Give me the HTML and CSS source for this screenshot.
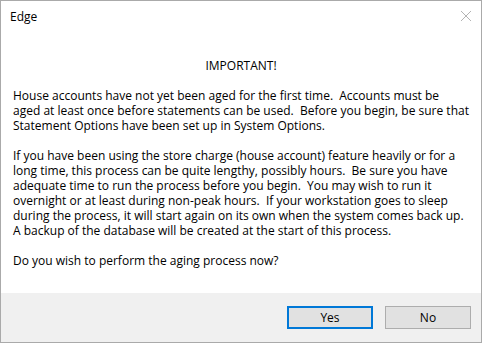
FILE: index.html
```html
<!DOCTYPE html>
<html>
<head>
<meta charset="utf-8">
<link rel="stylesheet" href="styles.css">
</head>
<body>
<div class="window">
  <div class="titlebar">
    <span class="title">Edge</span>
    <svg class="close" width="12" height="12" viewBox="0 0 12 12"><path d="M1 1 L11 11 M11 1 L1 11" stroke="#b4b4b4" stroke-width="1" fill="none"/></svg>
  </div>
  <div class="content">
    <div class="heading">IMPORTANT!</div>
    <div class="blank"></div>
    <div class="line">House accounts have not yet been aged for the first time.  Accounts must be</div>
    <div class="line">aged at least once before statements can be used.  Before you begin, be sure that</div>
    <div class="line">Statement Options have been set up in System Options.</div>
    <div class="blank"></div>
    <div class="line">If you have been using the store charge (house account) feature heavily or for a</div>
    <div class="line">long time, this process can be quite lengthy, possibly hours.  Be sure you have</div>
    <div class="line">adequate time to run the process before you begin.  You may wish to run it</div>
    <div class="line">overnight or at least during non-peak hours.  If your workstation goes to sleep</div>
    <div class="line">during the process, it will start again on its own when the system comes back up.</div>
    <div class="line">A backup of the database will be created at the start of this process.</div>
    <div class="blank"></div>
    <div class="line">Do you wish to perform the aging process now?</div>
  </div>
  <div class="footer">
    <button class="btn default">Yes</button>
    <button class="btn">No</button>
  </div>
</div>
</body>
</html>
```
FILE: styles.css
```css
html, body {
  margin: 0;
  padding: 0;
  background: #ffffff;
}
.window {
  box-sizing: border-box;
  width: 482px;
  height: 343px;
  border: 1px solid #aaaaaa;
  display: flex;
  flex-direction: column;
  font-family: "Open Sans", "Noto Sans", sans-serif;
  font-size: 12px;
  color: #000;
}
.titlebar {
  height: 30px;
  display: flex;
  align-items: center;
  justify-content: space-between;
  padding: 0 9px 0 9px;
}
.title {
  line-height: 15px;
}
.close {
  display: block;
  margin-top: -1px;
}
.content {
  flex: 1;
  padding: 27px 0 0 12px;
  background: #fff;
}
.heading {
  text-align: center;
  line-height: 15px;
  margin-left: -12px;
}
.line {
  white-space: pre;
  line-height: 15px;
  height: 15px;
}
.blank {
  height: 15px;
}
.footer {
  height: 49px;
  box-sizing: border-box;
  background: #f0f0f0;
  display: flex;
  justify-content: flex-end;
  align-items: flex-start;
  gap: 12px;
  padding: 13px 10px 0 0;
}
.btn {
  box-sizing: border-box;
  width: 86px;
  height: 23px;
  background: #e1e1e1;
  border: 1px solid #adadad;
  font-family: inherit;
  font-size: 12px;
  color: #000;
  padding: 0;
  margin: 0;
}
.btn.default {
  border: 2px solid #0078d7;
}
```
